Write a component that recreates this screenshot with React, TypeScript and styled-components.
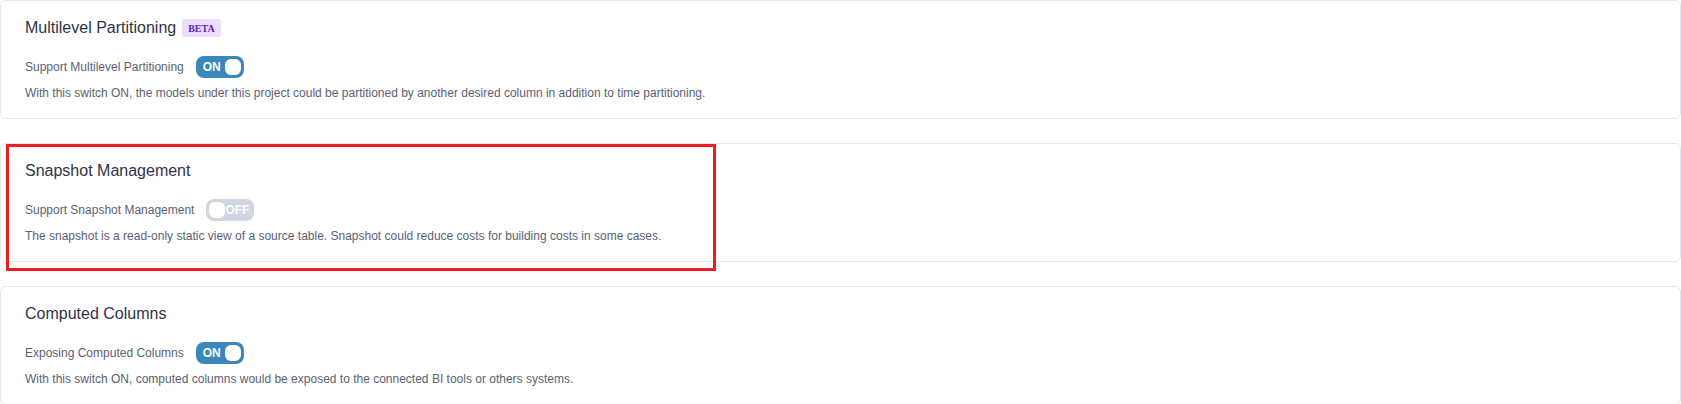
import React from "react";
import styled, { createGlobalStyle } from "styled-components";

const Global = createGlobalStyle`
  html, body { margin: 0; padding: 0; background: #ffffff; }
  body { font-family: "Liberation Sans", Arial, sans-serif; }
`;

const Page = styled.div`
  display: flex;
  flex-direction: column;
  gap: 24px;
  width: 1681px;
`;

const CardWrap = styled.div`
  position: relative;
`;

const Card = styled.section`
  box-sizing: border-box;
  height: 119px;
  border: 1px solid #e3e7f0;
  border-radius: 6px;
  padding: 15px 24px;
  display: flex;
  flex-direction: column;
  background: #fff;
`;

const TitleRow = styled.div`
  display: flex;
  align-items: center;
  gap: 6px;
  height: 24px;
  margin-bottom: 16px;
`;

const Title = styled.h3`
  margin: 0;
  font-size: 16px;
  line-height: 24px;
  font-weight: 400;
  color: #2e3447;
`;

const Badge = styled.span`
  display: inline-flex;
  align-items: center;
  height: 18px;
  padding: 0 6px;
  border-radius: 2px;
  background: #eddcfd;
  color: #5a22b5;
  font-family: "Liberation Serif", "Times New Roman", serif;
  font-weight: 700;
  font-size: 10px;
`;

const SwitchRow = styled.div`
  display: flex;
  align-items: center;
  gap: 12px;
  height: 22px;
`;

const Label = styled.span`
  font-size: 12px;
  color: #5b6174;
`;

const Switch = styled.span<{ $on: boolean }>`
  box-sizing: border-box;
  display: inline-flex;
  align-items: center;
  flex-direction: ${(p) => (p.$on ? "row" : "row-reverse")};
  justify-content: space-between;
  width: 48px;
  height: 22px;
  padding: ${(p) => (p.$on ? "0 3px 0 7px" : "0 5px 0 3px")};
  border-radius: 8px;
  background: ${(p) => (p.$on ? "#3a88bb" : "#cfd5e1")};
  color: #fff;
  font-size: 12px;
  font-weight: 700;
`;

const Knob = styled.span`
  width: 16px;
  height: 16px;
  border-radius: 6px;
  background: #fff;
`;

const Desc = styled.p`
  margin: 5px 0 0;
  font-size: 12px;
  line-height: 20px;
  color: #5b6174;
`;

const Highlight = styled.div`
  position: absolute;
  left: 6px;
  top: 1px;
  width: 710px;
  height: 127px;
  box-sizing: border-box;
  border: 3px solid #ec1c24;
  pointer-events: none;
`;

type Item = {
  title: string;
  beta?: boolean;
  label: string;
  on: boolean;
  desc: string;
  highlight?: boolean;
};

const items: Item[] = [
  {
    title: "Multilevel Partitioning",
    beta: true,
    label: "Support Multilevel Partitioning",
    on: true,
    desc: "With this switch ON, the models under this project could be partitioned by another desired column in addition to time partitioning.",
  },
  {
    title: "Snapshot Management",
    label: "Support Snapshot Management",
    on: false,
    desc: "The snapshot is a read-only static view of a source table. Snapshot could reduce costs for building costs in some cases.",
    highlight: true,
  },
  {
    title: "Computed Columns",
    label: "Exposing Computed Columns",
    on: true,
    desc: "With this switch ON, computed columns would be exposed to the connected BI tools or others systems.",
  },
];

export default function App() {
  return (
    <>
      <Global />
      <Page>
        {items.map((it) => (
          <CardWrap key={it.title}>
            <Card>
              <TitleRow>
                <Title>{it.title}</Title>
                {it.beta && <Badge>BETA</Badge>}
              </TitleRow>
              <SwitchRow>
                <Label>{it.label}</Label>
                <Switch $on={it.on}>
                  <span>{it.on ? "ON" : "OFF"}</span>
                  <Knob />
                </Switch>
              </SwitchRow>
              <Desc>{it.desc}</Desc>
            </Card>
            {it.highlight && <Highlight />}
          </CardWrap>
        ))}
      </Page>
    </>
  );
}
